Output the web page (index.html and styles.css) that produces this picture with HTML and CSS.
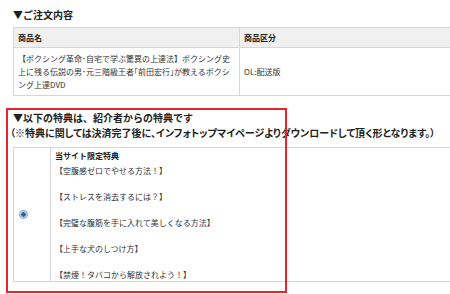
FILE: index.html
```html
<!DOCTYPE html>
<html lang="ja">
<head>
    <meta charset="UTF-8">
    <title>ご注文内容</title>
    <link rel="stylesheet" href="styles.css">
</head>
<body>
    <div class="page">
        <h2 class="block-title">▼ご注文内容</h2>
        <table class="order-table">
            <tr>
                <th class="col-name">商品名</th>
                <th>商品区分</th>
            </tr>
            <tr>
                <td class="col-name">【ボクシング革命･自宅で学ぶ驚異の上達法】ボクシング史上に残る伝説の男･元三階級王者｢前田宏行｣が教えるボクシング上達DVD</td>
                <td>OL:配送版</td>
            </tr>
        </table>

        <div class="bonus">
            <h2 class="block-title">▼以下の特典は、紹介者からの特典です</h2>
            <p class="bonus-note">（※特典に関しては決済完了後に、インフォトップマイページよりダウンロードして頂く形となります。）</p>
            <table class="bonus-table">
                <tr>
                    <td class="pick"><span class="radio"></span></td>
                    <td class="bonus-list">
                        <div class="bonus-head">当サイト限定特典</div>
                        <p>【空腹感ゼロでやせる方法！】</p>
                        <p>【ストレスを消去するには？】</p>
                        <p>【完璧な腹筋を手に入れて美しくなる方法】</p>
                        <p>【上手な犬のしつけ方】</p>
                        <p>【禁煙！タバコから解放されよう！】</p>
                    </td>
                </tr>
            </table>
            <div class="highlight"></div>
        </div>
    </div>
</body>
</html>
```

FILE: styles.css
```css
* {
    margin: 0;
    padding: 0;
    box-sizing: border-box;
}

body {
    width: 450px;
    height: 294px;
    overflow: hidden;
    background: #fff;
    color: #222;
    font-family: "Noto Sans CJK JP", "Noto Sans", sans-serif;
}

.page {
    padding: 8px 0 0 13px;
}

.block-title {
    font-size: 10px;
    font-weight: bold;
    line-height: 14px;
    height: 14px;
    white-space: nowrap;
}

.order-table,
.bonus-table {
    width: 470px;
    border-collapse: collapse;
    font-size: 8px;
    color: #333;
}

.order-table {
    margin-top: 5px;
}

.order-table th,
.order-table td,
.bonus-table td {
    border: 1px solid #d6d6d6;
    text-align: left;
    padding: 0 4px;
}

.order-table th {
    height: 20px;
    background: #f0f0f0;
    font-weight: bold;
    color: #222;
}

.order-table td {
    height: 48px;
    line-height: 13px;
}

.order-table .col-name {
    width: 226px;
}

.bonus {
    position: relative;
    margin-top: 15px;
}

.bonus-note {
    font-size: 10px;
    font-weight: bold;
    line-height: 15px;
    white-space: nowrap;
    font-feature-settings: "palt";
    margin-left: -3px;
}

.bonus-table {
    margin-top: 7px;
}

.bonus-table .pick {
    width: 37px;
    padding: 0 5px;
    vertical-align: middle;
}

.radio {
    display: block;
    width: 9px;
    height: 9px;
    border-radius: 50%;
    border: 1px solid #7f9db9;
    background: radial-gradient(circle, #2a5fb0 0 2px, #c9d8ec 2.5px 3px, #f4f6f8 3.5px);
}

.bonus-list {
    vertical-align: top;
    padding: 2px 4px 8px;
    line-height: 13px;
}

.bonus-head {
    font-weight: bold;
    color: #222;
    line-height: 16px;
}

.bonus-list p + p {
    margin-top: 13px;
}

.highlight {
    position: absolute;
    left: -7px;
    top: -3px;
    width: 281px;
    height: 185px;
    border: 2px solid #e8232b;
}
```
